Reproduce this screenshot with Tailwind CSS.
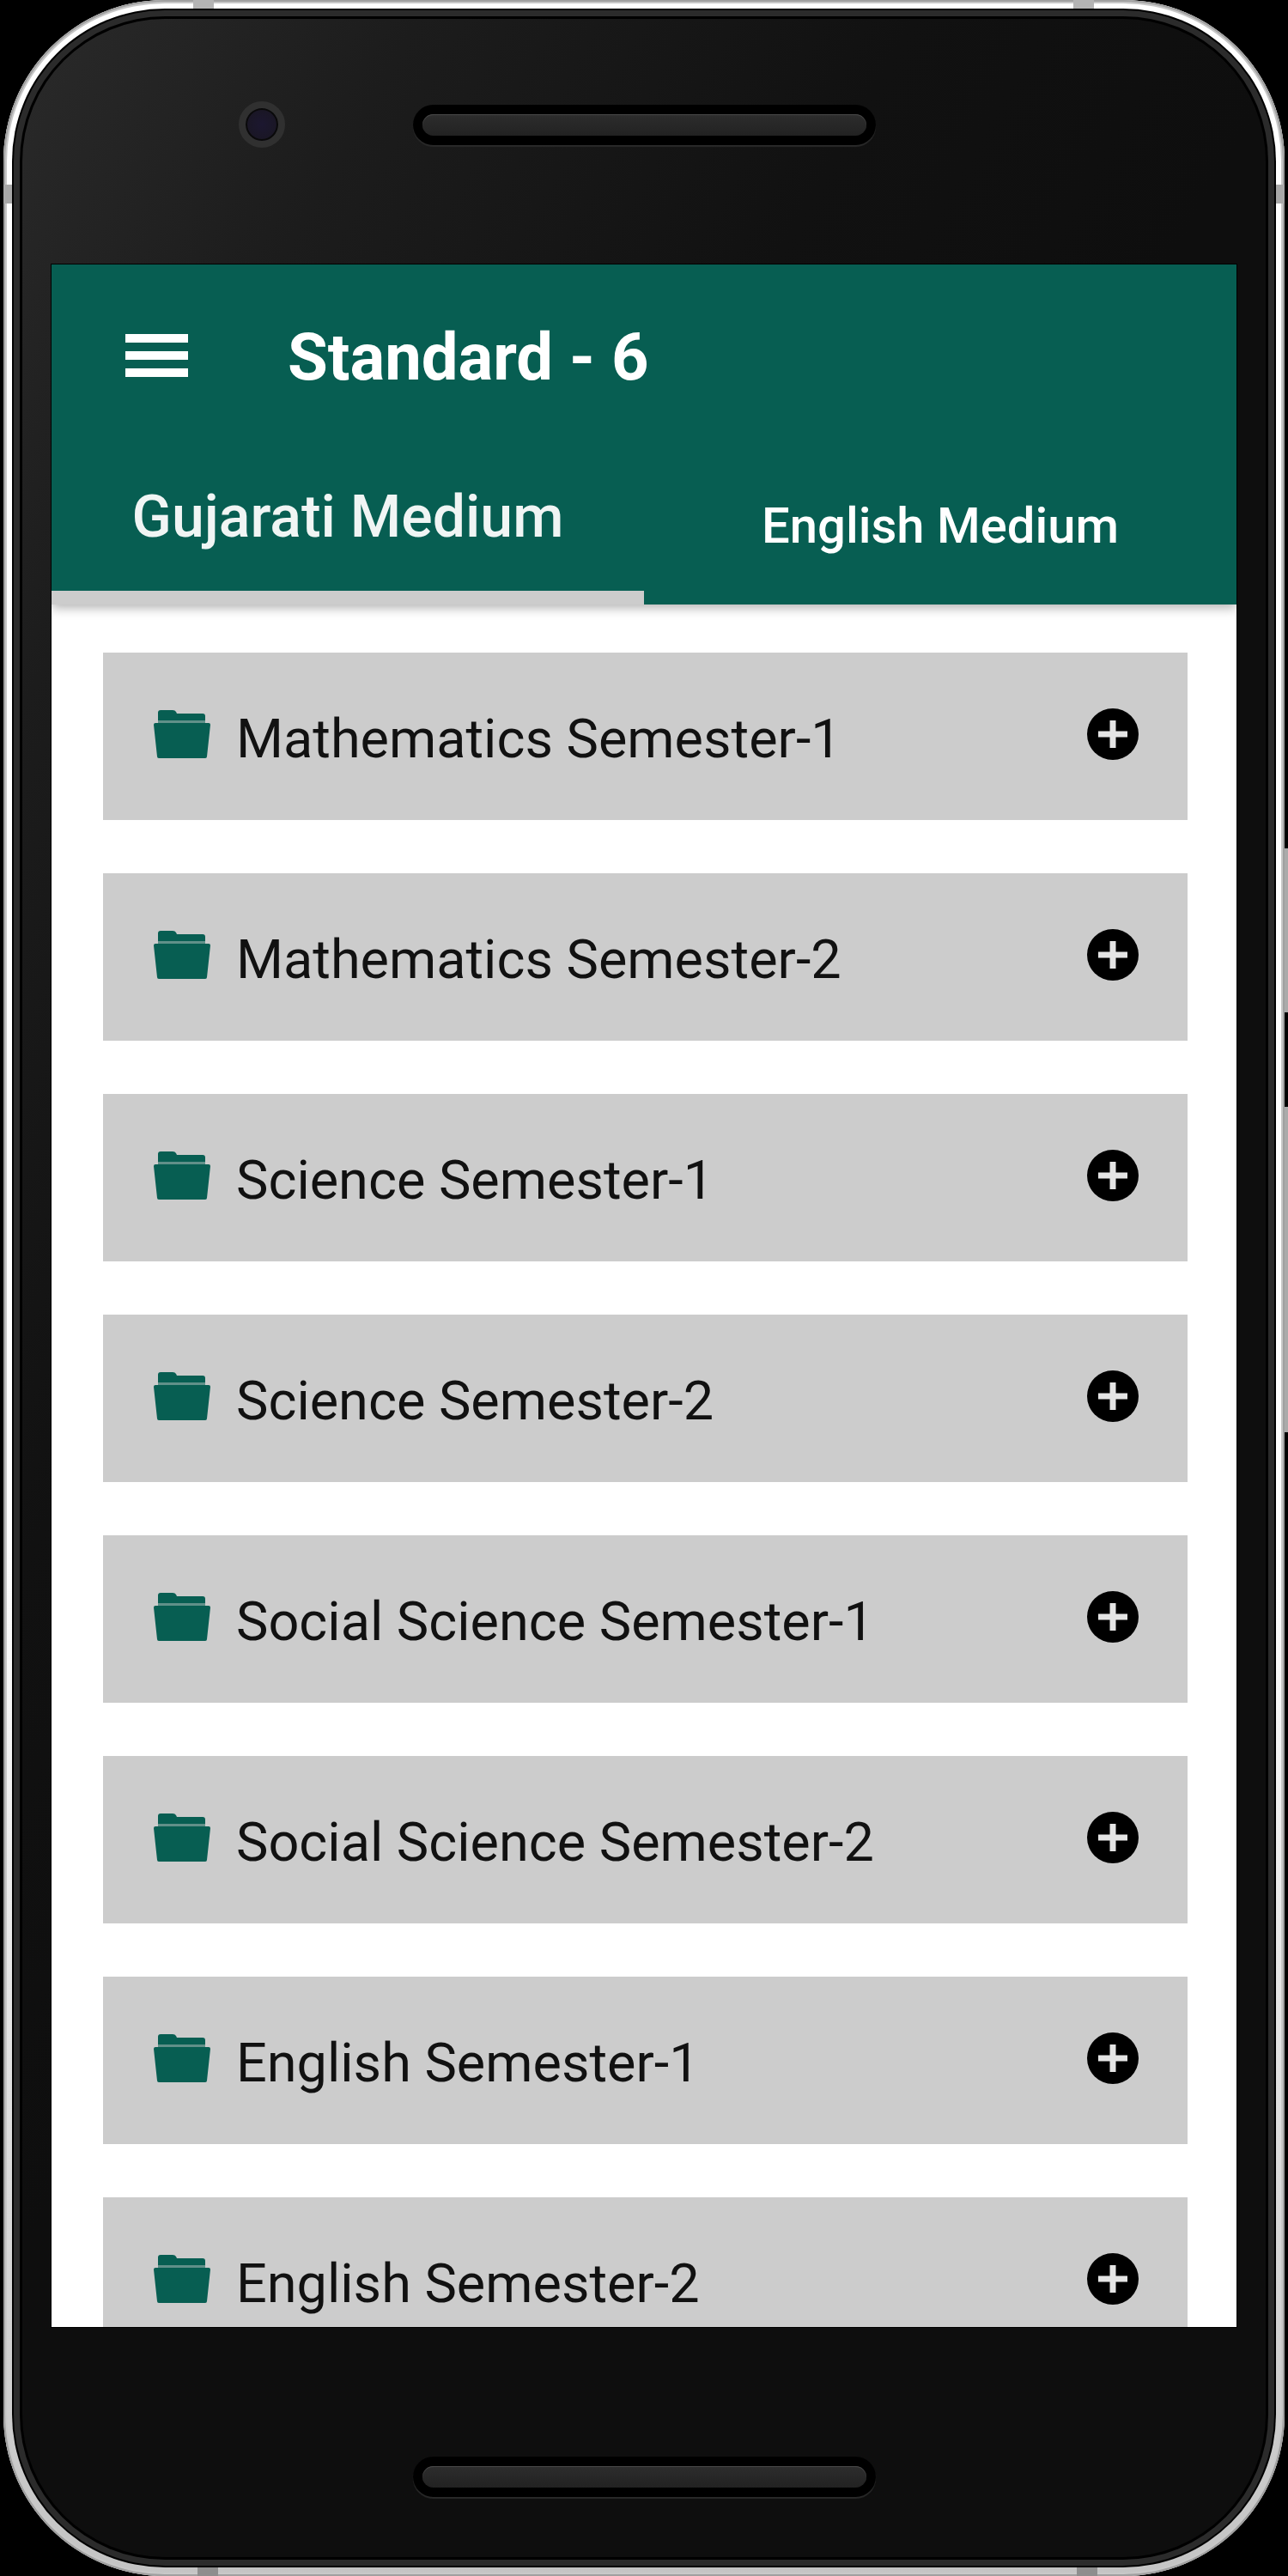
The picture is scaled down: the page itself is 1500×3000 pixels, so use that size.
<!DOCTYPE html>
<html lang="en">

<head>
    <meta charset="UTF-8" />
    <meta name="viewport" content="width=device-width, initial-scale=1.0" />
    <title>Standard - 6</title>
    <script src="https://cdn.jsdelivr.net/npm/@tailwindcss/browser@4"></script>
</head>

<body class="bg-black font-['Roboto',sans-serif]">

    <!-- Icons -->
    <svg class="hidden" aria-hidden="true">
        <symbol id="folder" viewBox="0 0 66 56">
            <path d="M5 12V3q0-3 3-3h14q3 0 4 2l1 2h30q3 0 3 3v5z" />
            <path opacity=".55" d="M5 12h55v3H5z" />
            <path d="M2 15h62q2 0 2 2l-4 37q0 2-2 2H6q-2 0-2-2L0 17q0-2 2-2z" />
        </symbol>
        <symbol id="plus" viewBox="0 0 60 60">
            <circle cx="30" cy="30" r="30" />
            <path stroke="#e4e4e4" stroke-width="7" d="M30 14v32M13 30h34" />
        </symbol>
    </svg>

    <!-- Phone frame -->
    <div class="relative h-screen px-1">

        <!-- Side keys -->
        <div class="absolute right-0 top-[988px] h-[191px] w-2 bg-[#aaa]"></div>
        <div class="absolute right-0 top-[1289px] h-[379px] w-2 bg-[#aaa]"></div>

        <div class="relative h-full overflow-hidden rounded-[188px] bg-linear-to-b from-white from-60% to-[#c4c4c4] p-[10px] shadow-[inset_0_0_0_2px_#a0a0a0,inset_0_0_0_4px_#c8c8c8]">

            <!-- Antenna bands -->
            <div class="absolute top-0 left-[221px] h-3 w-6 bg-[#b4b4b4]"></div>
            <div class="absolute top-0 right-[222px] h-3 w-6 bg-[#b4b4b4]"></div>
            <div class="absolute bottom-0 left-[226px] h-3 w-6 bg-[#8e8e8e]"></div>
            <div class="absolute bottom-0 right-[218px] h-3 w-6 bg-[#8e8e8e]"></div>
            <div class="absolute top-[215px] left-0 h-[22px] w-3 bg-[#a8a8a8]"></div>
            <div class="absolute top-[215px] right-0 h-[22px] w-3 bg-[#a8a8a8]"></div>

            <div class="relative h-full rounded-[178px] bg-black p-[2px]">
                <div class="h-full rounded-[176px] bg-[#2b2b2b] p-[7px]">
                    <div class="h-full rounded-[169px] bg-black p-[3px]">
                        <div class="flex h-full flex-col rounded-[166px] bg-[linear-gradient(120deg,#2a2a2a_0,#1c1c1c_400px,#111_900px,#0e0e0e_1300px)] px-[34px]">

                            <!-- Camera and earpiece -->
                            <div class="relative flex h-[286px] shrink-0 justify-center pt-[100px]">
                                <div class="absolute top-[96px] left-[218px] size-[54px] rounded-full border-8 border-[#303030] bg-radial from-[#1c1730] to-[#19161f] shadow-[inset_0_0_0_2px_#0a0a0a]"></div>
                                <div class="h-[47px] w-[539px] rounded-full bg-black p-[11px] shadow-[0_2px_1px_#2a2a2a]">
                                    <div class="h-full rounded-full bg-linear-to-b from-[#2d2d2d] to-[#222] shadow-[inset_0_1px_1px_#4a4a4a]"></div>
                                </div>
                            </div>

                            <!-- Screen -->
                            <main class="flex min-h-0 flex-1 flex-col overflow-hidden bg-white shadow-[0_0_0_1px_#000]">
                                <header class="relative shrink-0 bg-[#075e52] text-white shadow-[0_4px_12px_rgba(0,0,0,0.3)]">
                                    <div class="flex h-[212px] items-center gap-[116px] px-[86px]">
                                        <button type="button" aria-label="Menu" class="flex flex-col gap-[10px]">
                                            <span class="h-[10px] w-[73px] bg-white"></span>
                                            <span class="h-[10px] w-[73px] bg-white"></span>
                                            <span class="h-[10px] w-[73px] bg-white"></span>
                                        </button>
                                        <h1 class="pt-1 text-[76px] font-bold">Standard - 6</h1>
                                    </div>
                                    <nav class="grid h-[184px] grid-cols-2 items-stretch font-medium">
                                        <button type="button" class="border-b-[16px] border-[#ccc] pb-1 text-[68px] text-[#f0f5f4]">Gujarati Medium</button>
                                        <button type="button" class="text-[58px]">English Medium</button>
                                    </nav>
                                </header>

                                <ul id="subjects" class="flex flex-col gap-[62px] pt-[56px] pr-[57px] pl-[60px]"></ul>
                            </main>

                            <!-- Bottom speaker -->
                            <div class="flex h-[268px] shrink-0 justify-center pt-[151px]">
                                <div class="h-[47px] w-[539px] rounded-full bg-black p-[11px] shadow-[0_2px_1px_#2a2a2a]">
                                    <div class="h-full rounded-full bg-linear-to-b from-[#2d2d2d] to-[#222] shadow-[inset_0_1px_1px_#4a4a4a]"></div>
                                </div>
                            </div>
                        </div>
                    </div>
                </div>
            </div>
        </div>
    </div>

    <script>
        const subjects = ["Mathematics", "Science", "Social Science", "English"];
        const list = document.getElementById("subjects");

        subjects.forEach((name) => {
            [1, 2].forEach((semester) => {
                list.innerHTML += `
                    <li>
                        <button type="button" class="flex h-[195px] w-full items-center bg-[#ccc] pr-[57px] pl-[59px] text-left text-[63px] text-[#111]">
                            <svg class="mb-[6px] h-[56px] w-[66px] shrink-0 fill-[#075e52]"><use href="#folder" /></svg>
                            <span class="ml-[30px] flex-1 pt-2 whitespace-nowrap">${name} Semester-${semester}</span>
                            <svg class="mb-[6px] size-[60px] shrink-0 fill-black"><use href="#plus" /></svg>
                        </button>
                    </li>`;
            });
        });
    </script>

</body>

</html>
